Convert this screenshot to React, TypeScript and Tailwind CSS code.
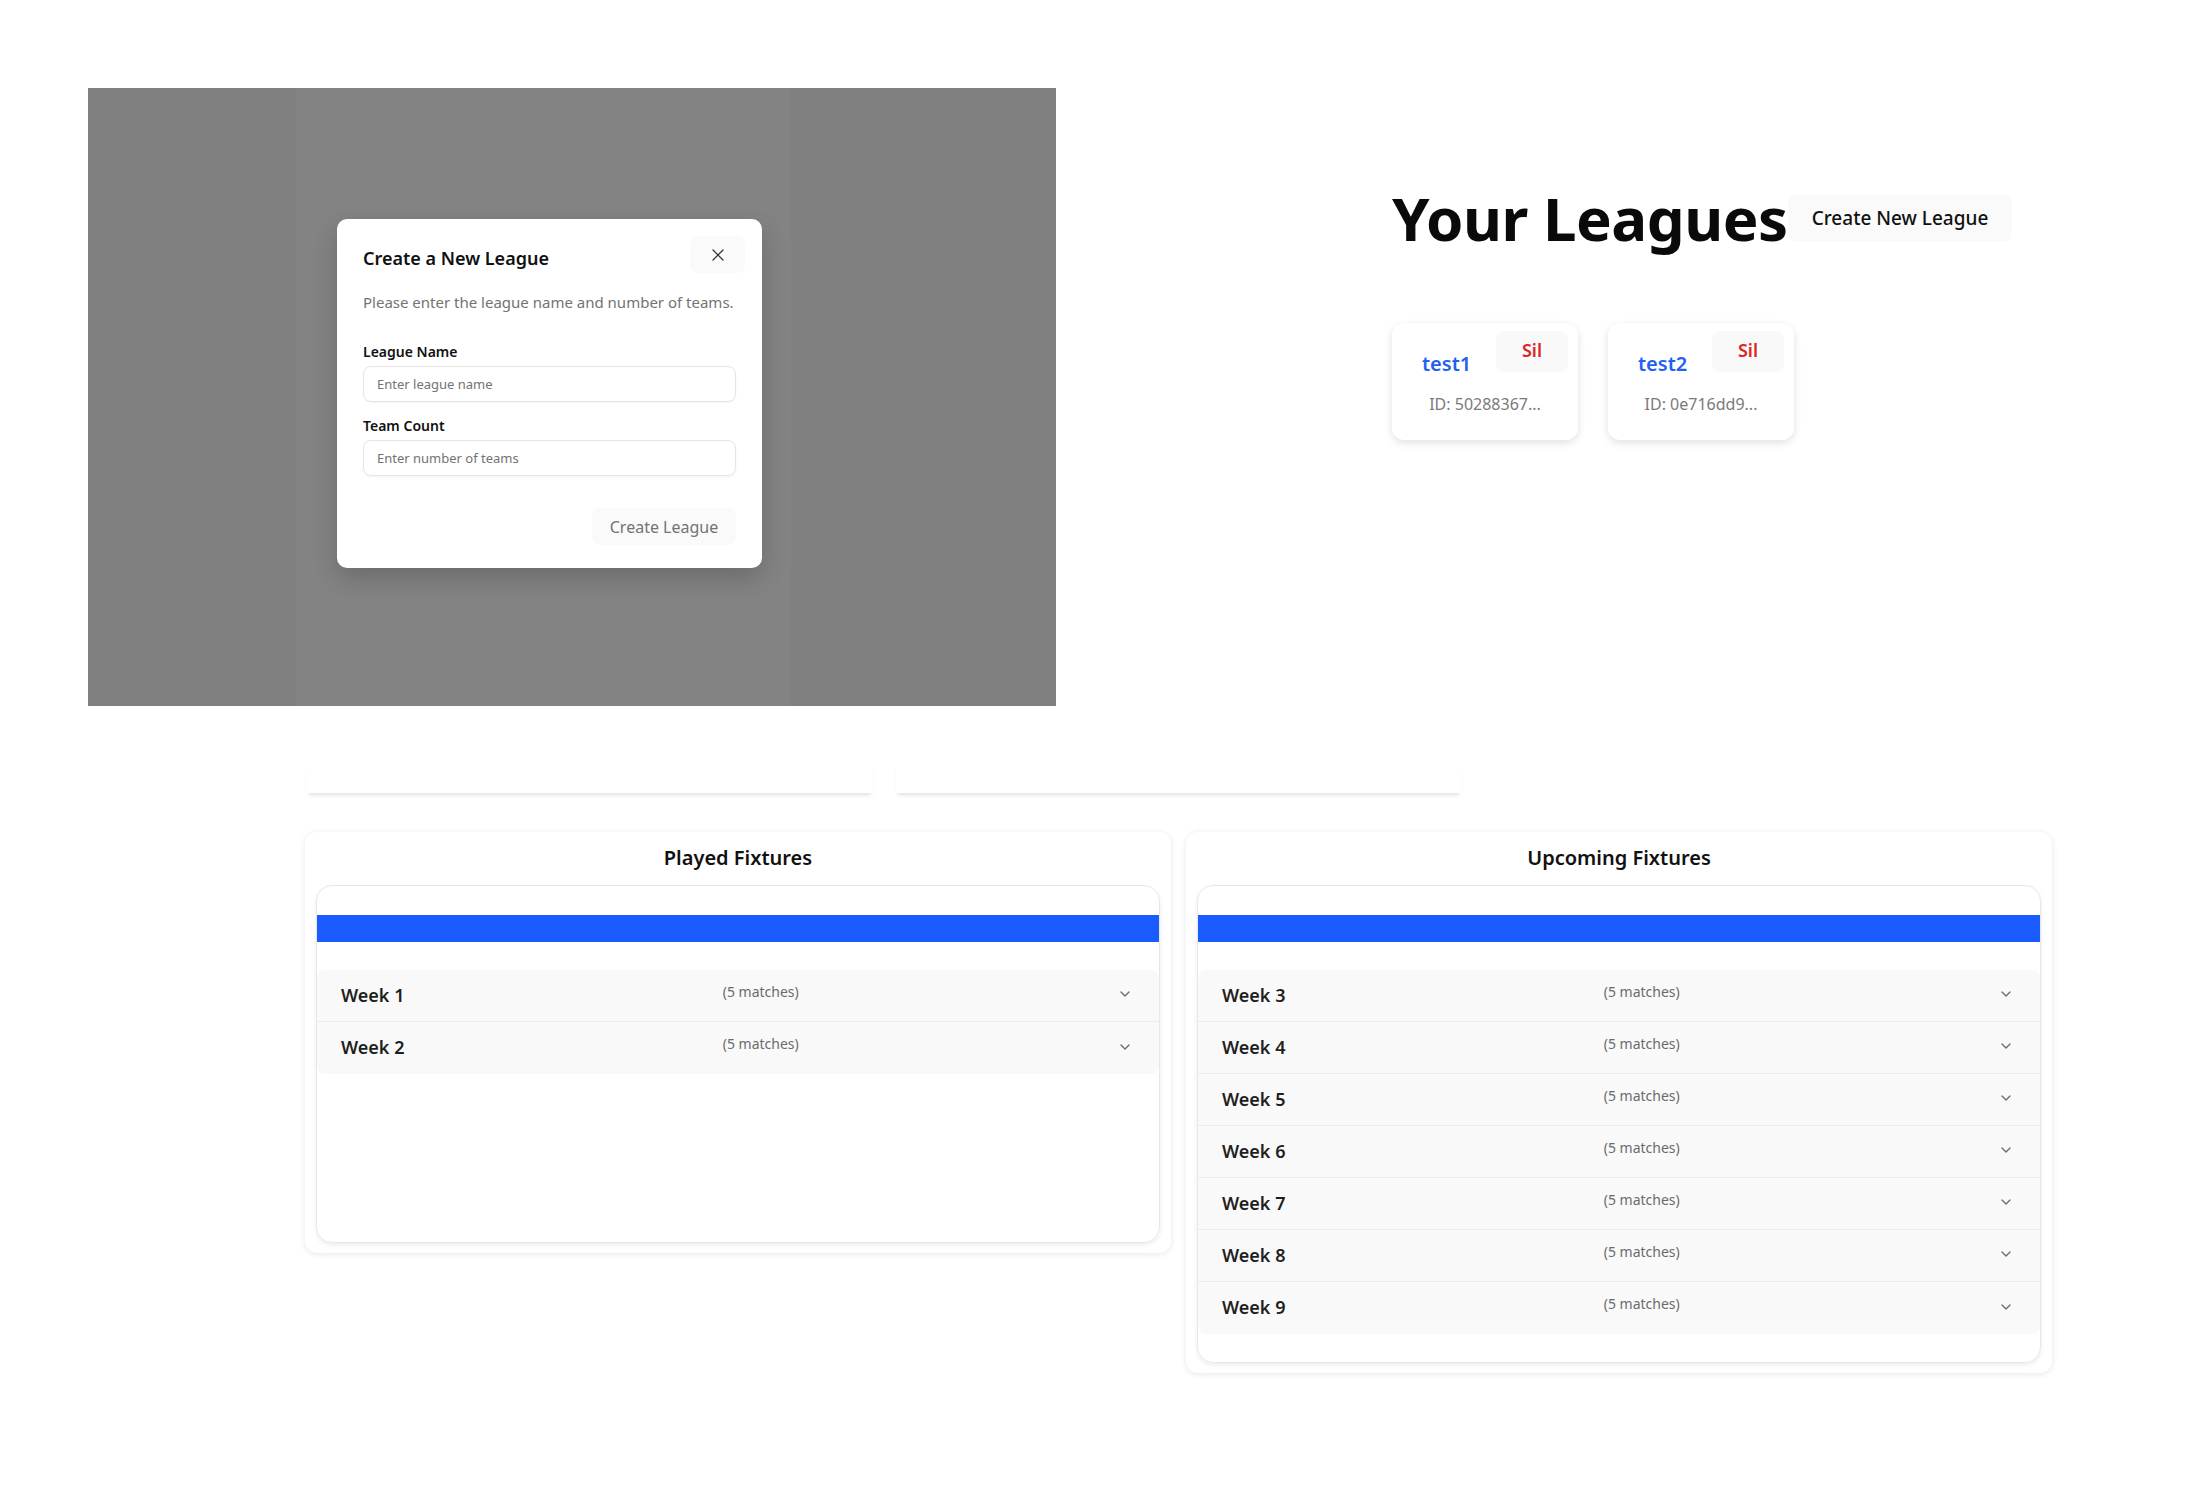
import React from 'react';
import { X, ChevronDown } from 'lucide-react';

const leagues = [
  { name: 'test1', id: '50288367...' },
  { name: 'test2', id: '0e716dd9...' },
];

const playedWeeks = [1, 2];
const upcomingWeeks = [3, 4, 5, 6, 7, 8, 9];

const CreateLeagueModal: React.FC = () => (
  <div className="w-[425px] h-[349px] bg-white rounded-[10px] shadow-[0_10px_25px_rgba(0,0,0,0.18)] pt-[17px] px-[26px]">
    <div className="flex justify-between items-start">
      <h2 className="mt-[8px] text-lg leading-7 font-semibold text-[#111]">Create a New League</h2>
      <button className="-mr-[9px] w-[55px] h-[37px] rounded-lg bg-[#fafafa] flex items-center justify-center text-[#333]">
        <X size={20} strokeWidth={1.5} />
      </button>
    </div>
    <p className="mt-[19px] text-[15px] leading-5 text-[#737373]">Please enter the league name and number of teams.</p>
    <label className="block mt-[30px] text-sm leading-5 font-semibold text-[#111]">League Name</label>
    <input
      placeholder="Enter league name"
      className="mt-[4px] w-full h-9 rounded-lg border border-[#e5e5e5] px-[13px] text-[13px] placeholder:text-[#737373] shadow-[0_1px_2px_rgba(0,0,0,0.05)] outline-none"
    />
    <label className="block mt-[14px] text-sm leading-5 font-semibold text-[#111]">Team Count</label>
    <input
      placeholder="Enter number of teams"
      className="mt-[4px] w-full h-9 rounded-lg border border-[#e5e5e5] px-[13px] text-[13px] placeholder:text-[#737373] shadow-[0_1px_2px_rgba(0,0,0,0.05)] outline-none"
    />
    <div className="flex justify-end mt-[32px]">
      <button className="w-[144px] h-[37px] rounded-lg bg-[#fafafa] text-base text-[#737373]">Create League</button>
    </div>
  </div>
);

const LeagueCard: React.FC<{ name: string; id: string }> = ({ name, id }) => (
  <div className="w-[186px] h-[117px] bg-white rounded-xl shadow-[0_3px_8px_rgba(0,0,0,0.12)] pt-[8px] pr-[10px]">
    <div className="flex justify-between items-start">
      <span className="mt-[19px] pl-[30px] text-xl leading-7 font-semibold text-[#2160f0]">{name}</span>
      <button className="w-[72px] h-[41px] rounded-lg bg-[#f9f9f9] text-lg font-semibold text-[#dc2626] pb-[3px]">Sil</button>
    </div>
    <p className="mt-[14px] pl-[10px] text-center text-base leading-6 text-[#7a7a7a]">ID: {id}</p>
  </div>
);

const WeekRow: React.FC<{ week: number }> = ({ week }) => (
  <button className="w-full h-[52px] flex items-center pl-6 pr-[26px] bg-[#f9f9f9] text-left">
    <span className="text-lg font-semibold text-[#1f1f1f] -mt-[2px]">Week {week}</span>
    <span className="flex-1 text-center text-[14px] text-[#6b6b6b] -mt-[9px]">(5 matches)</span>
    <ChevronDown size={16} strokeWidth={2} className="text-[#6b6b6b] -mt-[3px]" />
  </button>
);

const FixturePanel: React.FC<{ title: string; weeks: number[] }> = ({ title, weeks }) => (
  <div className="w-[866px] bg-white rounded-xl shadow-[0_1px_6px_rgba(0,0,0,0.1)] px-[11px] pt-[12px] pb-[10px]">
    <h3 className="text-xl leading-7 font-semibold text-center text-[#111]">{title}</h3>
    <div className="mt-[13px] min-h-[358px] rounded-2xl border border-[#e8e8e8] shadow-[0_2px_4px_rgba(0,0,0,0.08)] overflow-hidden pt-[29px] pb-[28px]">
      <div className="h-[27px] bg-[#1a5cff]" />
      <div className="mt-[28px] rounded-lg overflow-hidden divide-y divide-[#ececec]">
        {weeks.map(w => (
          <WeekRow key={w} week={w} />
        ))}
      </div>
    </div>
  </div>
);

const App: React.FC = () => {
  return (
    <div className="w-[2200px] min-h-[1500px] bg-white font-['Segoe_UI','Noto_Sans',sans-serif]">
      <div className="flex items-start">
        <div className="ml-[88px] mt-[88px] w-[968px] h-[618px] flex bg-[#808080]">
          <div className="w-[208px]" />
          <div className="w-[495px] bg-[#838383] pl-[41px] pt-[131px]">
            <CreateLeagueModal />
          </div>
        </div>
        <div className="ml-[336px] mt-[188px]">
          <div className="flex items-center">
            <h1 className="text-6xl leading-[60px] font-bold tracking-[-0.5px] text-[#0a0a0a]">Your Leagues</h1>
            <button className="h-[47px] px-[24px] rounded-lg bg-[#fafafa] text-[19px] font-medium text-[#111]">Create New League</button>
          </div>
          <div className="mt-[75px] flex gap-[30px]">
            {leagues.map(l => (
              <LeagueCard key={l.name} name={l.name} id={l.id} />
            ))}
          </div>
        </div>
      </div>

      <div className="mt-[57px] ml-[307px] flex gap-[23px]">
        <div className="w-[566px] h-[30px] bg-white shadow-[0_4px_4px_-2px_rgba(0,0,0,0.12)]" />
        <div className="w-[565px] h-[30px] bg-white shadow-[0_4px_4px_-2px_rgba(0,0,0,0.12)]" />
      </div>

      <div className="mt-[39px] ml-[305px] flex items-start gap-[15px]">
        <FixturePanel title="Played Fixtures" weeks={playedWeeks} />
        <FixturePanel title="Upcoming Fixtures" weeks={upcomingWeeks} />
      </div>
    </div>
  );
};

export default App;
